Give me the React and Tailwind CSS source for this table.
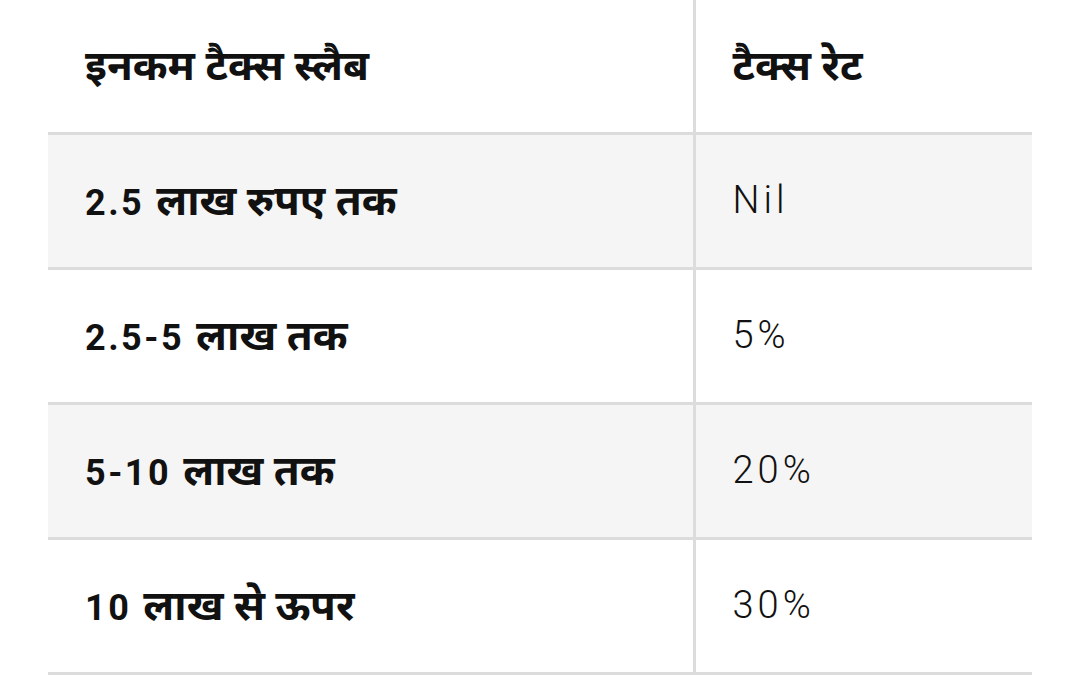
import React from 'react';

const rows = [
  { num: '2.5', text: 'लाख रुपए तक', rate: 'Nil' },
  { num: '2.5-5', text: 'लाख तक', rate: '5%' },
  { num: '5-10', text: 'लाख तक', rate: '20%' },
  { num: '10', text: 'लाख से ऊपर', rate: '30%' },
];

const App = () => {
  return (
    <div className="w-[1080px] h-[675px] overflow-hidden bg-white px-[48px] text-[#111]" style={{ fontFamily: 'Roboto, "Noto Sans", sans-serif' }}>
      <table className="w-[984px] border-collapse table-fixed">
        <thead>
          <tr className="h-[133px]">
            <th className="w-[646px] border-r-[3px] border-b-[3px] border-[#dcdcdc] pl-[37px] text-left text-[42px] font-bold">
              इनकम टैक्स स्लैब
            </th>
            <th className="border-b-[3px] border-[#dcdcdc] pl-[37px] text-left text-[42px] font-bold">
              टैक्स रेट
            </th>
          </tr>
        </thead>
        <tbody>
          {rows.map((row, i) => (
            <tr key={i} className={`h-[135px] ${i % 2 === 0 ? 'bg-[#f5f5f5]' : 'bg-white'}`}>
              <td className="border-r-[3px] border-b-[3px] border-[#dcdcdc] pl-[37px] font-bold whitespace-nowrap">
                <span className="text-[36px] tracking-[2.5px]">{row.num}</span>
                <span className="ml-[12px] text-[42px]">{row.text}</span>
              </td>
              <td className="border-b-[3px] border-[#dcdcdc] pl-[37px] text-[38px] font-light tracking-[4px]">
                {row.rate}
              </td>
            </tr>
          ))}
        </tbody>
      </table>
    </div>
  );
};

export default App;
